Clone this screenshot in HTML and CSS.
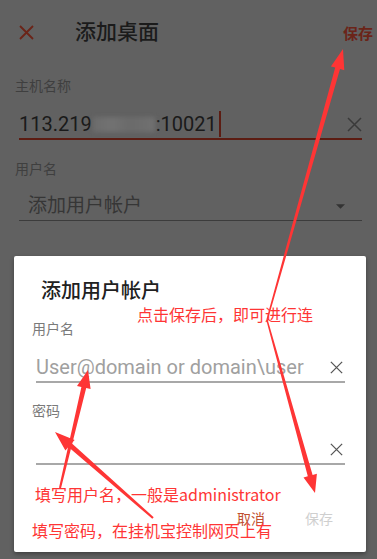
FILE: index.html
```html
<!DOCTYPE html>
<html lang="zh-CN">
<head>
<meta charset="utf-8">
<title>添加桌面</title>
<link rel="stylesheet" href="styles.css">
</head>
<body>
<div class="screen">
  <header class="toolbar">
    <svg class="close" viewBox="0 0 15 15"><path d="M1 1L14 14M14 1L1 14"/></svg>
    <h1 class="title">添加桌面</h1>
    <span class="save">保存</span>
  </header>

  <div class="field host">
    <label class="label">主机名称</label>
    <div class="input active">
      <span class="value">113.219<span class="blur"></span>:10021</span><span class="caret"></span>
      <svg class="clear" viewBox="0 0 15 15"><path d="M1 1L14 14M14 1L1 14"/></svg>
    </div>
  </div>

  <div class="field user">
    <label class="label">用户名</label>
    <div class="select">
      <span>添加用户帐户</span>
      <svg class="tri" viewBox="0 0 10 5"><polygon points="0,0 10,0 5,5"/></svg>
    </div>
  </div>
</div>

<div class="dialog">
  <h2 class="dlg-title">添加用户帐户</h2>
  <label class="dlg-label">用户名</label>
  <div class="dlg-input">
    <span class="placeholder">User@domain or domain\user</span>
    <svg class="dlg-clear" viewBox="0 0 15 15"><path d="M1 1L14 14M14 1L1 14"/></svg>
  </div>
  <label class="dlg-label pw">密码</label>
  <div class="dlg-input">
    <span class="placeholder"></span>
    <svg class="dlg-clear" viewBox="0 0 15 15"><path d="M1 1L14 14M14 1L1 14"/></svg>
  </div>
  <div class="actions">
    <span class="btn cancel">取消</span>
    <span class="btn disabled">保存</span>
  </div>
</div>

<div class="annot">
  <svg class="arrows" viewBox="0 0 377 559" width="377" height="559">
    <polygon points="267.7,320.2 340.0,69.0 344.3,70.2 343,49 330.9,66.4 335.2,67.6 266.3,319.8"/>
    <polygon points="267.7,319.8 312.6,474.9 316.9,473.7 315,493 303.5,477.5 307.8,476.3 266.3,320.2"/>
    <polygon points="61.0,488.2 86.2,388.1 90.6,389.1 88,370 77.0,385.9 81.4,386.9 59.0,487.8"/>
    <polygon points="153.7,517.2 71.7,443.3 74.6,439.9 55,432 65.4,450.5 68.4,447.1 152.3,518.8"/>
  </svg>
  <span class="note n1">点击保存后，即可进行连</span>
  <span class="note n2">填写用户名，一般是administrator</span>
  <span class="note n3">填写密码，在挂机宝控制网页上有</span>
</div>
</body>
</html>
```

FILE: styles.css
```css
* { box-sizing: border-box; }

html, body {
  margin: 0;
  padding: 0;
}

body {
  width: 377px;
  height: 559px;
  overflow: hidden;
  position: relative;
  background: #616161;
  font-family: Roboto, "Noto Sans CJK SC", sans-serif;
}

.toolbar {
  display: flex;
  align-items: center;
  height: 64px;
  padding: 0 4px 0 19px;
}

.close {
  width: 15px;
  height: 15px;
  fill: none;
  stroke: #6b2418;
  stroke-width: 1.8;
}

.title {
  margin: 0 0 0 41px;
  font-size: 21px;
  font-weight: 500;
  line-height: 28px;
  color: #1b1b1b;
}

.save {
  margin-left: auto;
  font-size: 15px;
  font-weight: 700;
  color: #6b2418;
}

.field {
  padding: 0 15px;
}

.host {
  padding-top: 12px;
}

.label {
  display: block;
  font-size: 14px;
  line-height: 20px;
  color: #3f3f3f;
}

.input {
  display: flex;
  align-items: center;
  height: 30px;
  margin: 14px 0 0 4px;
  border-bottom: 2px solid #5c1c12;
  font-size: 20px;
  line-height: 28px;
  color: #1a1a1a;
}

.value {
  white-space: nowrap;
}

.blur {
  display: inline-block;
  width: 62px;
  height: 15px;
  margin: 0 1px;
  vertical-align: -1px;
  background: linear-gradient(90deg, #6c6c6c, #727272 30%, #6a6a6a 60%, #717171);
  filter: blur(2px);
}

.caret {
  width: 2px;
  height: 26px;
  margin-left: 2px;
  background: #5c1c12;
}

.clear {
  margin-left: auto;
  width: 15px;
  height: 15px;
  fill: none;
  stroke: #3a3a3a;
  stroke-width: 1.5;
}

.user {
  margin-top: 19px;
}

.select {
  display: flex;
  align-items: center;
  height: 29px;
  margin: 13px 0 0 4px;
  padding: 0 17px 0 9px;
  border-bottom: 1px solid #3c3c3c;
  font-size: 19px;
  line-height: 28px;
  color: #363636;
}

.tri {
  margin-left: auto;
  width: 9px;
  height: 5px;
  fill: #333;
}

.dialog {
  position: absolute;
  left: 14px;
  top: 256px;
  width: 352px;
  height: 296px;
  padding: 21px 21px 0 18px;
  background: #fff;
  border-radius: 2px;
  box-shadow: 0 2px 4px rgba(0, 0, 0, 0.35);
}

.dlg-title {
  margin: 0 0 0 9px;
  font-size: 20px;
  font-weight: 500;
  line-height: 28px;
  color: #212121;
}

.dlg-label {
  display: block;
  margin-top: 14px;
  font-size: 14px;
  line-height: 20px;
  color: #7a7a7a;
}

.dlg-label.pw {
  margin-top: 18px;
}

.dlg-input {
  display: flex;
  align-items: center;
  height: 30px;
  margin: 14px 0 0 4px;
  border-bottom: 2px solid #a8a8a8;
  font-size: 20px;
  line-height: 28px;
}

.placeholder {
  color: #a0a0a0;
  white-space: nowrap;
}

.dlg-clear {
  margin-left: auto;
  margin-right: 2px;
  width: 13px;
  height: 13px;
  fill: none;
  stroke: #555;
  stroke-width: 1.5;
}

.actions {
  display: flex;
  justify-content: flex-end;
  gap: 40px;
  margin-top: 44px;
  padding-right: 12px;
  font-size: 14px;
  line-height: 20px;
}

.cancel {
  color: #c0502f;
}

.disabled {
  color: #cfcfcf;
}

.annot {
  position: absolute;
  inset: 0;
  pointer-events: none;
}

.arrows {
  position: absolute;
  left: 0;
  top: 0;
  fill: #fe3535;
}

.note {
  position: absolute;
  font-family: "Noto Sans CJK SC", sans-serif;
  font-size: 16px;
  line-height: 20px;
  color: #fe3535;
  white-space: nowrap;
}

.n1 { left: 137px; top: 304px; }
.n2 { left: 35px; top: 484px; }
.n3 { left: 32px; top: 520px; }
```
